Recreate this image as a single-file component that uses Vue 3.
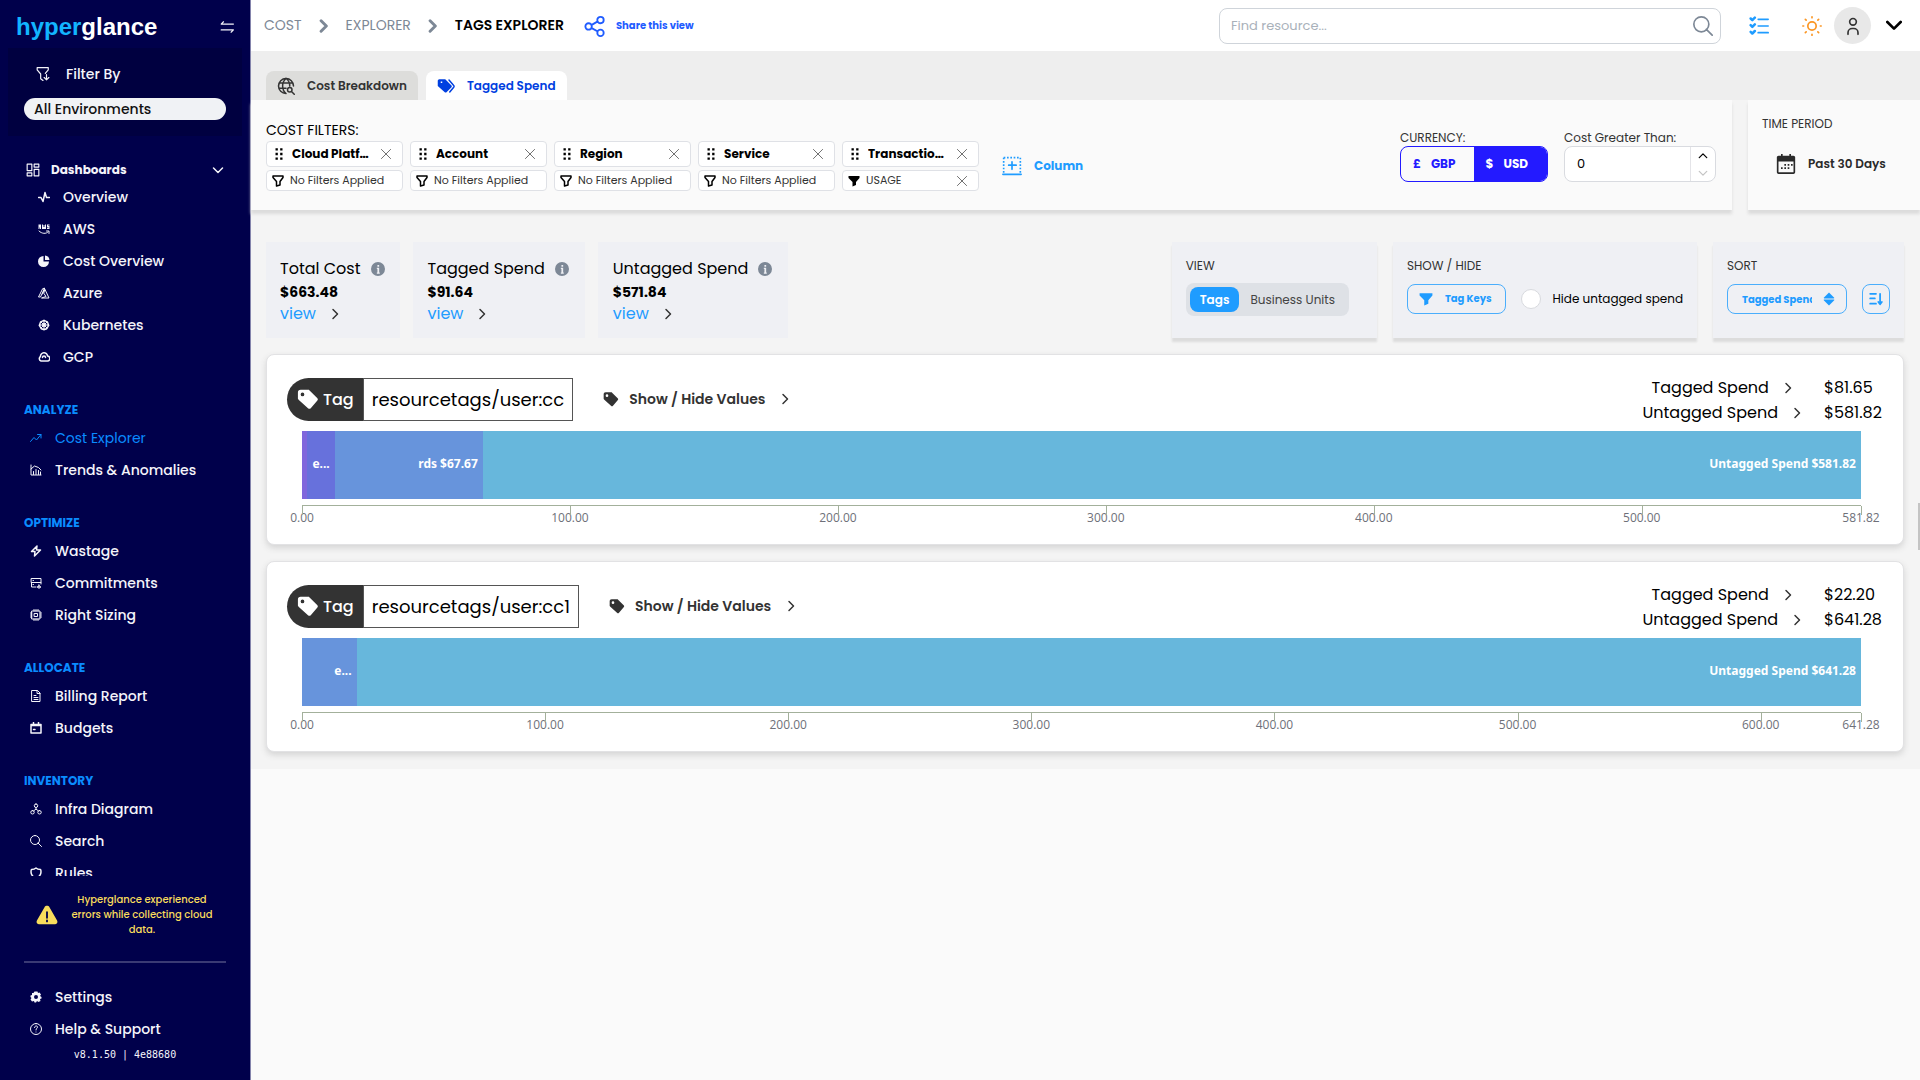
<template>
  <div class="layout">
    <!-- Sidebar -->
    <aside class="sidebar">
      <div class="sidebar-header">
        <a href="#" class="logo"><span class="logo-start">hyper</span>glance</a>
        <button class="icon-btn" aria-label="Collapse menu">
          <svg class="icon-14" viewBox="0 0 24 24" v-html="icons.swap"></svg>
        </button>
      </div>

      <div class="filter-box">
        <label for="environment" class="filter-label">
          <svg class="icon-14" viewBox="0 0 24 24" v-html="icons.filterDown"></svg>
          Filter By
        </label>
        <select id="environment" v-model="environment" class="env-select">
          <option>All Environments</option>
        </select>
      </div>

      <nav class="nav">
        <button class="nav-toggle" @click="showDashboards = !showDashboards">
          <svg class="icon-14" viewBox="0 0 24 24" v-html="icons.grid"></svg>
          <span>Dashboards</span>
          <svg class="icon-12 push" viewBox="0 0 24 24" v-html="icons.chevronDown"></svg>
        </button>
        <ul v-if="showDashboards" class="nav-list nested">
          <li v-for="item in dashboards" :key="item.label">
            <a href="#" class="nav-item">
              <svg class="icon-12" viewBox="0 0 24 24" v-html="icons[item.icon]"></svg>
              {{ item.label }}
            </a>
          </li>
        </ul>
        <section v-for="group in groups" :key="group.title" class="nav-group">
          <h2 class="nav-title">{{ group.title }}</h2>
          <ul class="nav-list">
            <li v-for="item in group.items" :key="item.label">
              <a href="#" class="nav-item" :class="{ active: item.label === activeItem }" @click.prevent="activeItem = item.label">
                <svg class="icon-12" viewBox="0 0 24 24" v-html="icons[item.icon]"></svg>
                {{ item.label }}
              </a>
            </li>
          </ul>
        </section>
      </nav>

      <div class="sidebar-footer">
        <div class="warning">
          <svg class="icon-22" viewBox="0 0 24 24" v-html="icons.warning"></svg>
          <p>Hyperglance experienced errors while collecting cloud data.</p>
        </div>
        <ul class="nav-list footer-list">
          <li>
            <a href="#" class="nav-item">
              <svg class="icon-12" viewBox="0 0 24 24" v-html="icons.gear"></svg>
              Settings
            </a>
          </li>
          <li>
            <a href="#" class="nav-item">
              <svg class="icon-12" viewBox="0 0 24 24" v-html="icons.help"></svg>
              Help &amp; Support
            </a>
          </li>
        </ul>
        <p class="version">v8.1.50 | 4e88680</p>
      </div>
    </aside>

    <main class="main">
      <!-- Top bar -->
      <header class="topbar">
        <nav class="breadcrumbs">
          <a href="#">COST</a>
          <svg class="icon-14" viewBox="0 0 24 24" v-html="icons.crumb"></svg>
          <a href="#">EXPLORER</a>
          <svg class="icon-14" viewBox="0 0 24 24" v-html="icons.crumb"></svg>
          <span class="current">TAGS EXPLORER</span>
        </nav>
        <button class="share-btn">
          <svg class="icon-22" viewBox="0 0 24 24" v-html="icons.share"></svg>
          Share this view
        </button>
        <div class="search">
          <input v-model="search" type="text" placeholder="Find resource..." aria-label="Find resource" />
          <svg class="icon-20" viewBox="0 0 24 24" v-html="icons.search"></svg>
        </div>
        <div class="top-actions">
          <button class="icon-btn tasks" aria-label="Tasks">
            <svg class="icon-20" viewBox="0 0 24 24" v-html="icons.checklist"></svg>
          </button>
          <button class="icon-btn theme" aria-label="Theme">
            <svg class="icon-20" viewBox="0 0 24 24" v-html="icons.sun"></svg>
          </button>
          <button class="icon-btn avatar" aria-label="Account">
            <svg class="icon-20" viewBox="0 0 24 24" v-html="icons.user"></svg>
          </button>
          <button class="icon-btn more" aria-label="Account menu">
            <svg class="icon-16" viewBox="0 0 24 24" v-html="icons.chevronBold"></svg>
          </button>
        </div>
      </header>

      <!-- Tabs -->
      <div class="tabs">
        <button class="tab" :class="{ active: tab === 'breakdown' }" @click="tab = 'breakdown'">
          <svg class="icon-18" viewBox="0 0 24 24" v-html="icons.globe"></svg>
          Cost Breakdown
        </button>
        <button class="tab" :class="{ active: tab === 'tagged' }" @click="tab = 'tagged'">
          <svg class="icon-18" viewBox="0 0 24 24" v-html="icons.tags"></svg>
          Tagged Spend
        </button>
      </div>

      <div class="workspace">
        <!-- Filters -->
        <div class="filter-row">
          <div class="panel filters-panel">
            <div class="cost-filters">
              <h3 class="filters-title">COST FILTERS:</h3>
              <div class="chips">
                <div v-for="filter in filters" :key="filter.name" class="chip">
                  <div class="chip-head">
                    <svg class="icon-14" viewBox="0 0 24 24" v-html="icons.drag"></svg>
                    <span class="chip-name">{{ filter.name }}</span>
                    <button class="icon-btn" aria-label="Remove column">
                      <svg class="icon-10" viewBox="0 0 24 24" v-html="icons.close"></svg>
                    </button>
                  </div>
                  <div class="chip-value">
                    <svg class="icon-12" viewBox="0 0 24 24" v-html="filter.value ? icons.funnelFull : icons.funnel"></svg>
                    <span>{{ filter.value || 'No Filters Applied' }}</span>
                    <button v-if="filter.value" class="icon-btn" aria-label="Clear filter">
                      <svg class="icon-10" viewBox="0 0 24 24" v-html="icons.close"></svg>
                    </button>
                  </div>
                </div>
              </div>
            </div>
            <button class="column-btn">
              <svg class="icon-20" viewBox="0 0 24 24" v-html="icons.addColumn"></svg>
              Column
            </button>
            <div class="field currency">
              <span class="field-label">CURRENCY:</span>
              <div class="currency-group">
                <button :class="{ active: currency === 'GBP' }" @click="currency = 'GBP'"><span>£</span>GBP</button>
                <button :class="{ active: currency === 'USD' }" @click="currency = 'USD'"><span>$</span>USD</button>
              </div>
            </div>
            <div class="field">
              <label for="minCost" class="field-label">Cost Greater Than:</label>
              <div class="number-box">
                <input id="minCost" v-model="minCost" type="text" />
                <div class="spinner">
                  <button class="icon-btn" aria-label="Increase" @click="minCost++">
                    <svg class="icon-10" viewBox="0 0 24 24" v-html="icons.chevronUp"></svg>
                  </button>
                  <button class="icon-btn" aria-label="Decrease" :disabled="minCost <= 0" @click="minCost--">
                    <svg class="icon-10" viewBox="0 0 24 24" v-html="icons.chevronDown"></svg>
                  </button>
                </div>
              </div>
            </div>
          </div>
          <div class="panel time-panel">
            <h3 class="small-title">TIME PERIOD</h3>
            <button class="period-btn">
              <svg class="icon-20" viewBox="0 0 24 24" v-html="icons.calendar"></svg>
              Past 30 Days
            </button>
          </div>
        </div>

        <!-- Totals and view options -->
        <div class="summary-row">
          <div v-for="total in totals" :key="total.title" class="total-card">
            <h3>{{ total.title }}<svg class="icon-14" viewBox="0 0 24 24" v-html="icons.info"></svg></h3>
            <strong>{{ total.amount }}</strong>
            <a href="#">view<svg class="icon-12" viewBox="0 0 24 24" v-html="icons.chevronRight"></svg></a>
          </div>

          <div class="option-card view-card">
            <h3 class="small-title">VIEW</h3>
            <div class="segmented">
              <button :class="{ active: view === 'tags' }" @click="view = 'tags'">Tags</button>
              <button :class="{ active: view === 'units' }" @click="view = 'units'">Business Units</button>
            </div>
          </div>
          <div class="option-card">
            <h3 class="small-title">SHOW / HIDE</h3>
            <div class="option-controls">
              <button class="outline-btn keys-btn">
                <svg class="icon-14" viewBox="0 0 24 24" v-html="icons.funnelFull"></svg>
                Tag Keys
              </button>
              <label class="check">
                <input v-model="hideUntagged" type="checkbox" />
                Hide untagged spend
              </label>
            </div>
          </div>
          <div class="option-card">
            <h3 class="small-title">SORT</h3>
            <div class="option-controls">
              <div class="outline-btn sort-box">
                <select v-model="sortBy" aria-label="Sort by">
                  <option>Tagged Spend</option>
                </select>
                <svg class="icon-14" viewBox="0 0 24 24" v-html="icons.sorter"></svg>
              </div>
              <button class="outline-btn order-btn" aria-label="Sort order">
                <svg class="icon-14" viewBox="0 0 24 24" v-html="icons.sortDown"></svg>
              </button>
            </div>
          </div>
        </div>

        <!-- Tag cards -->
        <article v-for="tag in tags" :key="tag.name" class="tag-card">
          <div class="tag-head">
            <div class="tag-name">
              <span class="tag-badge">
                <svg class="icon-22" viewBox="0 0 24 24" v-html="icons.tag"></svg>
                Tag
              </span>
              <span class="tag-key">{{ tag.name }}</span>
            </div>
            <button class="values-btn">
              <svg class="icon-16" viewBox="0 0 24 24" v-html="icons.tag"></svg>
              Show / Hide Values
              <svg class="icon-12" viewBox="0 0 24 24" v-html="icons.chevronRight"></svg>
            </button>
            <dl class="spend">
              <dt>Tagged Spend<svg class="icon-12" viewBox="0 0 24 24" v-html="icons.chevronRight"></svg></dt>
              <dd>{{ tag.tagged }}</dd>
              <dt>Untagged Spend<svg class="icon-12" viewBox="0 0 24 24" v-html="icons.chevronRight"></svg></dt>
              <dd>{{ tag.untagged }}</dd>
            </dl>
          </div>
          <div class="chart">
            <div class="bar">
              <div
                v-for="part in tag.parts"
                :key="part.color"
                class="bar-part"
                :style="{ width: part.width + '%', background: part.color }"
              >{{ part.label }}</div>
            </div>
            <div class="axis">
              <span
                v-for="tick in ticks(tag.max)"
                :key="tick"
                class="tick"
                :style="{ left: (tick / tag.max) * 100 + '%' }"
              >{{ tick.toFixed(2) }}</span>
            </div>
          </div>
        </article>
      </div>
      <div class="scroll-thumb"></div>
    </main>
  </div>
</template>

<script setup>
import { ref } from 'vue';

const environment = ref('All Environments');
const showDashboards = ref(true);
const activeItem = ref('Cost Explorer');
const search = ref('');
const tab = ref('tagged');
const currency = ref('USD');
const minCost = ref(0);
const view = ref('tags');
const hideUntagged = ref(false);
const sortBy = ref('Tagged Spend');

const dashboards = [
  { label: 'Overview', icon: 'pulse' },
  { label: 'AWS', icon: 'aws' },
  { label: 'Cost Overview', icon: 'pie' },
  { label: 'Azure', icon: 'azure' },
  { label: 'Kubernetes', icon: 'kubernetes' },
  { label: 'GCP', icon: 'gcp' },
];

const groups = [
  {
    title: 'ANALYZE',
    items: [
      { label: 'Cost Explorer', icon: 'trend' },
      { label: 'Trends & Anomalies', icon: 'chart' },
    ],
  },
  {
    title: 'OPTIMIZE',
    items: [
      { label: 'Wastage', icon: 'bolt' },
      { label: 'Commitments', icon: 'server' },
      { label: 'Right Sizing', icon: 'chip' },
    ],
  },
  {
    title: 'ALLOCATE',
    items: [
      { label: 'Billing Report', icon: 'file' },
      { label: 'Budgets', icon: 'budget' },
    ],
  },
  {
    title: 'INVENTORY',
    items: [
      { label: 'Infra Diagram', icon: 'nodes' },
      { label: 'Search', icon: 'search' },
      { label: 'Rules', icon: 'shield' },
    ],
  },
];

const filters = [
  { name: 'Cloud Platform', value: '' },
  { name: 'Account', value: '' },
  { name: 'Region', value: '' },
  { name: 'Service', value: '' },
  { name: 'Transaction Type', value: 'USAGE' },
];

const totals = [
  { title: 'Total Cost', amount: '$663.48' },
  { title: 'Tagged Spend', amount: '$91.64' },
  { title: 'Untagged Spend', amount: '$571.84' },
];

const tags = [
  {
    name: 'resourcetags/user:cc',
    tagged: '$81.65',
    untagged: '$581.82',
    max: 581.82,
    parts: [
      { label: '', width: 0.3, color: '#8067dc' },
      { label: 'e...', width: 1.8, color: '#6771dc' },
      { label: 'rds $67.67', width: 9.5, color: '#6794dc' },
      { label: 'Untagged Spend $581.82', width: 88.4, color: '#67b7dc' },
    ],
  },
  {
    name: 'resourcetags/user:cc1',
    tagged: '$22.20',
    untagged: '$641.28',
    max: 641.28,
    parts: [
      { label: 'e...', width: 3.5, color: '#6794dc' },
      { label: 'Untagged Spend $641.28', width: 96.5, color: '#67b7dc' },
    ],
  },
];

// every full hundred, then the end of the axis
const ticks = (max) => {
  const list = [];
  for (let value = 0; value < max; value += 100) {
    list.push(value);
  }
  list.push(max);
  return list;
};

const line = (d, width = 2) =>
  `<path d="${d}" fill="none" stroke="currentColor" stroke-width="${width}" stroke-linecap="round" stroke-linejoin="round"/>`;
const solid = (d) => `<path d="${d}" fill="currentColor" fill-rule="evenodd"/>`;

const icons = {
  swap: line('M23 7H2l4-4M2 17h21l-4 4'),
  filterDown: line('M12 23l-4-3v-8L2 5V1h19v4l-5 6M18 13v9M14 18l4 4 4-4'),
  grid: line('M2 2h8v11H2zM14 2h8v5h-8zM14 11h8v11h-8zM2 17h8v5H2z'),
  chevronDown: line('M3 8l9 9 9-9', 3),
  chevronUp: line('M3 16l9-9 9 9', 3),
  chevronBold: line('M2 6l10 10L22 6', 4),
  chevronRight: line('M8 3l9 9-9 9', 3),
  crumb: line('M7 3l9 9-9 9', 5),
  pulse: line('M1 13h5l4 8 4-18 3 10h6', 3),
  aws: solid('M1 3h5v9H4V9H3v3H1zM8 3h2v5h1V4h2v4h1V3h2v9H8zM18 3h5v2h-3v1h3v6h-5v-2h3V9h-3z') + line('M2 16c6 6 14 6 18 2M17 16h5v5'),
  pie: solid('M11 2v11h11A11 11 0 1 1 11 2zM14 1a10 10 0 0 1 9 9h-9z'),
  azure: line('M9 4L1 20h4L13 3zM14 5l8 17H7l9-3-4-6zM13 3L9 14'),
  kubernetes:
    solid('M12 1l8 4 3 8-5 8-6 2-6-2-5-8 3-8zM12 5a7 7 0 1 0 0 14 7 7 0 0 0 0-14z') +
    line('M12 4v16M4 12h16M6 6l12 12M18 6L6 18', 2) +
    line('M12 9a3 3 0 1 0 0 6 3 3 0 0 0 0-6z'),
  gcp: line('M6 20a5 5 0 0 1-1-9 7 7 0 0 1 14-1 5 5 0 0 1-1 10zM9 13a3 3 0 0 1 6 0', 3),
  trend: line('M1 19l7-8 5 5 9-11M15 5h7v7'),
  chart: line('M2 2v20h20M2 10l7-6 8 3 5 5M7 21v-6M12 21V11M17 21v-8M21 21v-5'),
  bolt: line('M14 2L3 13h7l-1 9 12-12h-8z', 3),
  server: line('M3 3h19v8H3zM12 20H3v-9M22 11v3M6 7h1M6 15h1M18 16l1 3 3 1-3 1-1 2-1-2-3-1 3-1z'),
  chip: line('M4 4h16v16H4zM9 9h6v6H9zM8 1v3M12 1v3M16 1v3M8 20v3M12 20v3M16 20v3M1 8h3M1 12h3M1 16h3M20 8h3M20 12h3M20 16h3'),
  file: line('M4 1h11l5 5v17H4zM14 1v6h6M8 11h4M8 15h8M8 19h8'),
  budget: line('M2 5h20v17H2zM2 7h20M7 1v5M17 1v5M7 15h3', 3),
  nodes: line('M12 2a3 3 0 1 0 0 7 3 3 0 0 0 0-7zM5 15a3 3 0 1 0 0 7 3 3 0 0 0 0-7zM19 15a3 3 0 1 0 0 7 3 3 0 0 0 0-7zM12 9v4M7 16l5-4 5 4'),
  search: line('M10 1a9 9 0 1 0 0 18 9 9 0 0 0 0-18zM16 16l7 7'),
  shield: line('M2 10c0-2 0-4 1-5 4 0 7-1 9-3 2 2 5 3 9 3 1 1 1 3 1 5 0 6-4 10-10 13C6 20 2 16 2 10z', 3),
  warning:
    '<path d="M12 2c1 0 2 0 3 2l8 14c1 2 0 4-2 4H3c-2 0-3-2-2-4L9 4c1-2 2-2 3-2z" fill="currentColor"/>' +
    '<path d="M12 9v6M12 18v1" stroke="#00004b" stroke-width="2" stroke-linecap="round"/>',
  gear: solid('M9 1h6l1 3 3-1 3 4-2 3 3 2v3l-3 1 1 4-4 2-3-2-2 3h-3l-1-3-4 1-3-4 2-3-2-2V9l3-1 0-4 3 0zM12 8a4 4 0 1 0 0 8 4 4 0 0 0 0-8z'),
  help: line('M12 1a11 11 0 1 0 0 22 11 11 0 0 0 0-22zM9 9c0-4 6-4 6-1 0 3-3 2-3 6M12 18v0'),
  share: line('M18 2a3 3 0 1 0 0 7 3 3 0 0 0 0-7zM5 9a3 3 0 1 0 0 7 3 3 0 0 0 0-7zM18 16a3 3 0 1 0 0 7 3 3 0 0 0 0-7zM8 11l7-4M8 14l7 4'),
  checklist: line('M11 4h12M11 12h12M11 20h12', 2) + line('M2 3l2 2 3-3M2 11l2 2 3-3M2 19l2 2 3-3', 3),
  sun: line('M12 7a5 5 0 1 0 0 10 5 5 0 0 0 0-10zM12 1v1M12 22v1M1 12h1M22 12h1M4 4l1 1M19 19l1 1M4 20l1-1M19 5l1-1'),
  user: line('M12 3a4 4 0 1 0 0 8 4 4 0 0 0 0-8zM6 22v-2a5 5 0 0 1 5-5h2a5 5 0 0 1 5 5v2'),
  globe: line('M12 22a10 10 0 1 1 10-10M12 2c-6 5-6 15 0 20M12 2c3 2 5 6 5 10M3 8h18M3 15h9M17 14a3 3 0 1 0 0 6 3 3 0 0 0 0-6zM20 20l3 3'),
  tags: solid('M1 5c0-1 1-2 2-2h8l8 8c1 1 1 2 0 3l-6 6c-1 1-2 1-3 0l-9-8zM5 6v2h2V6z') + line('M16 4l6 7c1 1 1 2 0 3l-5 6'),
  drag: solid('M6 2h4v4H6zM14 2h4v4h-4zM6 10h4v4H6zM14 10h4v4h-4zM6 18h4v4H6zM14 18h4v4h-4z'),
  close: line('M1 1l22 22M23 1L1 23'),
  funnel: line('M2 2h20v3l-6 8v7l-7 2v-9L2 5z', 3),
  funnelFull: solid('M1 2h22v4l-7 8v6l-7 3v-9L1 6z'),
  addColumn:
    '<path d="M2 2h20M2 2v18M22 2v18" fill="none" stroke="currentColor" stroke-width="2" stroke-dasharray="2 2"/>' +
    line('M1 22h22M12 7v9M8 11h9'),
  calendar: solid('M6 0h2v2h8V0h2v2h3c1 0 2 1 2 2v18c0 1-1 2-2 2H3c-1 0-2-1-2-2V4c0-1 1-2 2-2h3zM3 9v12c0 1 0 1 1 1h16c1 0 1 0 1-1V9zM10 12h2v2h-2zM14 12h2v2h-2zM18 12h2v2h-2zM6 16h2v2H6zM10 16h2v2h-2zM14 16h2v2h-2z'),
  info: solid('M12 0a12 12 0 1 0 0 24 12 12 0 0 0 0-24zM11 5h3v3h-3zM10 10h4v8h1v2h-5v-2h1v-6h-1z'),
  tag: solid('M1 5c0-2 1-3 3-3h8c1 0 1 0 2 1l8 8c1 1 1 2 0 3l-7 8c-1 1-2 1-3 0L2 13c-1-1-1-1-1-2zM6 5a2 2 0 1 0 0 4 2 2 0 0 0 0-4z'),
  sorter: solid('M12 1l9 9c0 1 0 1-1 1H4c-1 0-1 0-1-1zM4 13h16c1 0 1 0 1 1l-9 9-9-9c0-1 0-1 1-1z'),
  sortDown: line('M2 3h10M2 11h8M2 20h10M19 3v17M16 17l3 4 3-4', 3),
};
</script>

<style>
body {
  background: #fafafa;
}
</style>

<style scoped>
* {
  box-sizing: border-box;
}

.layout {
  display: flex;
  min-height: 100vh;
  font-family: Poppins, Inter, "Open Sans", sans-serif;
  font-size: 14px;
  color: #000;
}

h2,
h3,
p,
ul,
dl,
dd {
  margin: 0;
  padding: 0;
}

button,
input,
select {
  font: inherit;
  color: inherit;
}

button {
  display: flex;
  align-items: center;
  padding: 0;
  border: none;
  background: none;
  cursor: pointer;
  white-space: nowrap;
}

a {
  color: inherit;
  text-decoration: none;
}

svg {
  flex: none;
}

.icon-10 { width: 10px; height: 10px; }
.icon-12 { width: 12px; height: 12px; }
.icon-14 { width: 14px; height: 14px; }
.icon-16 { width: 16px; height: 16px; }
.icon-18 { width: 18px; height: 18px; }
.icon-20 { width: 20px; height: 20px; }
.icon-22 { width: 22px; height: 22px; }

.icon-btn {
  justify-content: center;
}

/* Sidebar */
.sidebar {
  display: flex;
  flex-direction: column;
  flex: none;
  width: 251px;
  height: 100vh;
  background: #00004b;
  border-right: 1px solid #8484ac;
  color: #f4f4fa;
}

.sidebar-header {
  display: flex;
  align-items: center;
  justify-content: space-between;
  height: 48px;
  padding: 6px 16px 0;
}

.logo {
  font-family: "Liberation Sans", Arial, sans-serif;
  font-size: 24px;
  font-weight: bold;
  line-height: 30px;
  color: #fff;
}

.logo-start {
  color: #12b4ff;
}

.filter-box {
  height: 88px;
  margin: 0 8px;
  padding: 15px 16px 0;
  background: #000040;
}

.filter-label {
  display: flex;
  align-items: center;
  gap: 16px;
  height: 22px;
  padding-left: 12px;
  font-size: 14px;
  font-weight: 500;
}

.env-select {
  display: block;
  width: 100%;
  height: 22px;
  margin-top: 13px;
  padding: 0 10px;
  border: none;
  border-radius: 11px;
  background: #f0f2f5;
  appearance: none;
  color: #111;
  font-weight: 500;
}

.nav {
  flex: 1;
  min-height: 0;
  padding: 23px 24px 0;
  overflow: hidden;
}

.nav-toggle {
  gap: 11px;
  width: 100%;
  height: 22px;
  padding: 0 2px;
  font-size: 12px;
  font-weight: 700;
}

.push {
  margin-left: auto;
}

.nav-list {
  padding-left: 6px;
  list-style: none;
}

.nested {
  padding-left: 14px;
}

.nav-item {
  display: flex;
  align-items: center;
  gap: 13px;
  height: 32px;
  font-weight: 500;
}

.nav-item.active {
  color: #0a8cff;
  font-weight: 400;
}

.nav-group {
  margin-top: 25px;
}

.nav-title {
  color: #0a8cff;
  font-size: 12px;
  font-weight: 700;
  line-height: 24px;
}

.sidebar-footer {
  flex: none;
  height: 204px;
  padding: 16px 24px 0;
}

.warning {
  display: flex;
  align-items: center;
  gap: 8px;
  height: 71px;
  padding: 0 8px 24px 12px;
  border-bottom: 2px solid #3a3a74;
  color: #f8dc5c;
  font-size: 10px;
  font-weight: 500;
  line-height: 15px;
  text-align: center;
}

.footer-list {
  padding-top: 18px;
}

.version {
  font-family: "DejaVu Sans Mono", monospace;
  font-size: 10px;
  line-height: 20px;
  text-align: center;
}

/* Top bar */
.main {
  position: relative;
  flex: 1;
  min-width: 0;
}

.topbar {
  display: flex;
  align-items: center;
  height: 51px;
  padding: 0 18px 0 13px;
  background: #fff;
}

.breadcrumbs {
  display: flex;
  align-items: center;
  gap: 15px;
  color: #7d8896;
  font-size: 14px;
}

.breadcrumbs .current {
  color: #000;
  font-weight: 600;
}

.share-btn {
  gap: 10px;
  margin-left: 20px;
  color: #1f5cff;
  font-size: 10px;
  font-weight: 700;
}

.search {
  display: flex;
  align-items: center;
  width: 502px;
  height: 36px;
  margin-left: auto;
  padding: 0 7px 0 11px;
  border: 1px solid #cfd4da;
  border-radius: 8px;
  color: #7d8896;
}

.search input {
  flex: 1;
  border: none;
  outline: none;
  padding: 0;
  background: none;
  font-size: 13px;
}

.search input::placeholder {
  color: #a9b1ba;
}

.top-actions {
  display: flex;
  align-items: center;
  margin-left: 28px;
}

.tasks {
  color: #1f9cff;
}

.theme {
  margin-left: 33px;
  color: #fb9623;
}

.avatar {
  width: 37px;
  height: 37px;
  margin-left: 12px;
  border-radius: 50%;
  background: #e8e8e8;
  color: #333;
}

.more {
  margin-left: 15px;
}

/* Tabs */
.tabs {
  display: flex;
  align-items: flex-end;
  gap: 8px;
  height: 49px;
  padding: 0 15px;
  background: #eee;
}

.tab {
  gap: 12px;
  height: 29px;
  padding: 0 11px;
  border-radius: 8px 8px 0 0;
  background: #dddddb;
  color: #333;
  font-size: 12px;
  font-weight: 600;
}

.tab.active {
  background: #fff;
  color: #0040e0;
}

/* Filters */
.workspace {
  padding-bottom: 17px;
  background: #f4f4f4;
}

.filter-row {
  display: flex;
  gap: 16px;
}

.panel {
  height: 110px;
  background: #fafafa;
  box-shadow: 0 4px 3px #dcdcdc;
}

.filters-panel {
  display: flex;
  flex: 1;
  padding: 20px 16px 0 15px;
}

.filters-title {
  font-size: 14px;
  font-weight: 400;
  line-height: 21px;
}

.chips {
  display: flex;
  gap: 7px;
}

.chip {
  width: 137px;
}

.chip-head,
.chip-value {
  display: flex;
  align-items: center;
  border: 1px solid #dfe1e6;
  border-radius: 4px;
  background: #fff;
}

.chip-head {
  gap: 6px;
  height: 26px;
  padding: 0 11px 0 5px;
  font-size: 12px;
  font-weight: 700;
}

.chip-name {
  flex: 1;
  overflow: hidden;
  text-overflow: ellipsis;
  white-space: nowrap;
}

.chip-value {
  gap: 6px;
  height: 21px;
  margin-top: 3px;
  padding: 0 11px 0 5px;
  font-size: 11px;
  line-height: 19px;
}

.chip-value span {
  flex: 1;
  color: #333;
}

.chip .icon-btn {
  color: #555;
}

.column-btn {
  gap: 12px;
  height: 20px;
  margin: 36px 0 0 23px;
  color: #1f9cff;
  font-size: 12px;
  font-weight: 700;
}

.field {
  width: 152px;
  padding-top: 10px;
}

.currency {
  width: 148px;
  margin: 0 16px 0 auto;
}

.field-label {
  display: block;
  color: #333;
  font-size: 12px;
  line-height: 16px;
}

.currency-group {
  display: flex;
  height: 36px;
  border: 1px solid #231aff;
  border-radius: 8px;
  overflow: hidden;
}

.currency-group button {
  gap: 10px;
  padding: 0 18px 0 12px;
  color: #231aff;
  font-size: 12px;
  font-weight: 700;
}

.currency-group button:last-child {
  flex: 1;
}

.currency-group .active {
  background: #231aff;
  color: #fff;
}

.number-box {
  display: flex;
  height: 36px;
  border: 1px solid #d9dbe0;
  border-radius: 8px;
  background: #fff;
}

.number-box input {
  flex: 1;
  min-width: 0;
  padding: 0 12px;
  border: none;
  outline: none;
  background: none;
  font-size: 13px;
}

.spinner {
  display: flex;
  flex-direction: column;
  width: 25px;
  border-left: 1px solid #e4e4e8;
}

.spinner button {
  flex: 1;
}

.spinner button:disabled {
  color: #c4c4c4;
}

.time-panel {
  width: 172px;
  padding: 14px 14px 0;
}

.small-title {
  color: #333;
  font-size: 12px;
  font-weight: 400;
  line-height: 20px;
}

.period-btn {
  gap: 12px;
  margin: 20px 0 0 14px;
  color: #2a2a2a;
  font-size: 12px;
  font-weight: 600;
}

/* Totals and view options */
.summary-row {
  display: flex;
  padding: 32px 16px 0 15px;
}

.total-card {
  height: 96px;
  margin-right: 13px;
  padding: 15px 15px 0 14px;
  background: #eff0f4;
}

.total-card + .total-card {
  padding: 15px 16px 0 15px;
}

.total-card h3 {
  display: flex;
  align-items: center;
  gap: 10px;
  font-size: 16px;
  font-weight: 400;
  line-height: 24px;
}

.total-card h3 svg {
  color: #7d8896;
}

.total-card strong {
  display: block;
  font-size: 14px;
  line-height: 22px;
}

.total-card a {
  display: flex;
  align-items: center;
  gap: 13px;
  color: #1f9cff;
  font-size: 16px;
  line-height: 22px;
}

.total-card a svg {
  color: #333;
}

.option-card {
  height: 96px;
  margin-left: 16px;
  padding: 14px;
  background: #eff0f4;
  box-shadow: 0 4px 2px #dcdcdc;
}

.view-card {
  margin-left: auto;
  padding-right: 28px;
}

.segmented {
  display: flex;
  gap: 1px;
  height: 33px;
  margin-top: 7px;
  padding: 4px;
  border-radius: 8px;
  background: #dee1e6;
}

.segmented button {
  padding: 0 10px;
  border-radius: 8px;
  color: #444;
  font-size: 12px;
}

.segmented .active {
  background: #1f9cff;
  color: #fff;
  font-weight: 600;
}

.option-controls {
  display: flex;
  align-items: center;
  gap: 15px;
  margin-top: 8px;
}

.outline-btn {
  display: flex;
  align-items: center;
  height: 30px;
  border: 1px solid #4aaefc;
  border-radius: 8px;
  color: #1f9cff;
  font-size: 10px;
  font-weight: 700;
}

.keys-btn {
  gap: 12px;
  padding: 0 13px 0 11px;
}

.check {
  display: flex;
  align-items: center;
  gap: 12px;
  font-size: 12px;
}

.check input {
  width: 20px;
  height: 20px;
  margin: 0;
  border: 1px solid #d8dade;
  border-radius: 50%;
  background: #fff;
  appearance: none;
}

.check input:checked {
  background: #1f9cff;
}

.sort-box {
  justify-content: space-between;
  width: 120px;
  padding: 0 10px 0 14px;
}

.sort-box select {
  width: 70px;
  padding: 0;
  border: none;
  outline: none;
  background: none;
  appearance: none;
}

.order-btn {
  justify-content: center;
  width: 28px;
}

/* Tag cards */
.tag-card {
  margin: 16px 16px 0 15px;
  padding: 19px 19px 0 20px;
  height: 191px;
  border: 1px solid #e2e2e4;
  border-radius: 8px;
  background: #fff;
  box-shadow: 0 3px 6px #d4d4d4;
}

.tag-head {
  display: flex;
  align-items: center;
  height: 50px;
}

.tag-name {
  display: flex;
  height: 43px;
}

.tag-badge {
  display: flex;
  align-items: center;
  gap: 4px;
  padding: 0 9px 0 10px;
  border-radius: 22px 0 0 22px;
  background: #333;
  color: #fff;
  font-size: 16px;
  font-weight: 500;
}

.tag-key {
  padding: 0 8px;
  border: 1px solid #555;
  font-size: 18px;
  line-height: 41px;
}

.values-btn {
  gap: 10px;
  margin-left: 30px;
  color: #333;
  font-size: 14px;
  font-weight: 600;
}

.values-btn .icon-12 {
  margin-left: 4px;
}

.spend {
  display: grid;
  grid-template-columns: auto 60px;
  column-gap: 21px;
  margin: 2px 0 0 auto;
  font-size: 16px;
  line-height: 25px;
}

.spend dt {
  display: flex;
  align-items: center;
  justify-content: center;
  gap: 13px;
}

.spend svg {
  color: #333;
}

.chart {
  margin: 7px 23px 0 15px;
  font-family: "Segoe UI", "Open Sans", "Noto Sans", sans-serif;
  font-size: 12px;
}

.bar {
  display: flex;
  height: 68px;
}

.bar-part {
  overflow: hidden;
  color: #fff;
  font-family: "Segoe UI", "Noto Sans", sans-serif;
  font-weight: 700;
  line-height: 66px;
  text-align: right;
  white-space: nowrap;
}

.bar-part:not(:empty) {
  padding-right: 5px;
}

.axis {
  position: relative;
  height: 20px;
  margin-top: 6px;
  border-top: 1px solid #a3b09b;
}

/* tick labels sit on the value they mark */
.tick {
  position: absolute;
  top: 0;
  width: 60px;
  margin-left: -30px;
  padding-top: 4px;
  color: #6e7079;
  line-height: 16px;
  text-align: center;
}

.tick::before {
  content: "";
  position: absolute;
  top: 0;
  left: 30px;
  width: 1px;
  height: 9px;
  background: #a3b09b;
}

.scroll-thumb {
  position: absolute;
  top: 503px;
  right: 0;
  width: 2px;
  height: 47px;
  background: #c4c4c4;
}
</style>
